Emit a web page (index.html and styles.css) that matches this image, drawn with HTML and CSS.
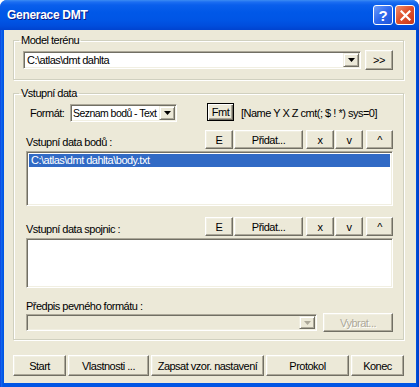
FILE: index.html
```html
<!DOCTYPE html>
<html lang="cs">

<head>
    <meta charset="UTF-8">
    <title>Generace DMT</title>
    <link rel="stylesheet" href="styles.css">
</head>

<body>

    <div class="window">

        <div class="titlebar">
            <span class="title">Generace DMT</span>
            <div class="caption-btns">
                <span class="cap-btn help">?</span>
                <span class="cap-btn close">
                    <svg width="11" height="11" viewBox="0 0 11 11">
                        <path d="M1.5 1.5 L9.5 9.5 M9.5 1.5 L1.5 9.5" stroke="#fff" stroke-width="2.2" stroke-linecap="square" />
                    </svg>
                </span>
            </div>
        </div>

        <div class="client">

            <fieldset class="group group-model">
                <legend>Model terénu</legend>
                <div class="row row-model">
                    <div class="combo combo-model">
                        <span class="combo-text">C:\atlas\dmt dahlta</span>
                        <span class="drop"><svg width="7" height="4" viewBox="0 0 7 4"><polygon points="0,0 7,0 3.5,4" fill="#000" /></svg></span>
                    </div>
                    <button class="btn btn-more">&gt;&gt;</button>
                </div>
            </fieldset>

            <fieldset class="group group-data">
                <legend>Vstupní data</legend>

                <div class="row row-format">
                    <span class="lbl-format">Formát:</span>
                    <div class="combo combo-format">
                        <span class="combo-text">Seznam bodů - Text</span>
                        <span class="drop"><svg width="7" height="4" viewBox="0 0 7 4"><polygon points="0,0 7,0 3.5,4" fill="#000" /></svg></span>
                    </div>
                    <button class="btn btn-default btn-fmt">Fmt</button>
                    <span class="fmt-info">[Name Y X Z cmt(; $ ! *) sys=0]</span>
                </div>

                <div class="row row-list row-body">
                    <span class="lbl">Vstupní data bodů :</span>
                    <div class="list-btns">
                        <button class="btn btn-e">E</button>
                        <button class="btn btn-add">Přidat...</button>
                        <button class="btn btn-x">x</button>
                        <button class="btn btn-v">v</button>
                        <button class="btn btn-up">^</button>
                    </div>
                </div>
                <div class="listbox list-body">
                    <div class="item selected">C:\atlas\dmt dahlta\body.txt</div>
                </div>

                <div class="row row-list row-lines">
                    <span class="lbl">Vstupní data spojnic :</span>
                    <div class="list-btns">
                        <button class="btn btn-e">E</button>
                        <button class="btn btn-add">Přidat...</button>
                        <button class="btn btn-x">x</button>
                        <button class="btn btn-v">v</button>
                        <button class="btn btn-up">^</button>
                    </div>
                </div>
                <div class="listbox list-lines"></div>

                <div class="lbl lbl-fixed">Předpis pevného formátu :</div>
                <div class="row row-fixed">
                    <div class="combo combo-fixed disabled">
                        <span class="combo-text"></span>
                        <span class="drop"><svg width="7" height="4" viewBox="0 0 7 4"><polygon points="0,0 7,0 3.5,4" fill="#ACA899" /></svg></span>
                    </div>
                    <button class="btn btn-pick" disabled>Vybrat...</button>
                </div>
            </fieldset>

            <div class="actions">
                <button class="btn act-start">Start</button>
                <button class="btn act-props">Vlastnosti ...</button>
                <button class="btn act-save">Zapsat vzor. nastavení</button>
                <button class="btn act-log">Protokol</button>
                <button class="btn act-end">Konec</button>
            </div>

        </div>

    </div>

</body>

</html>
```

FILE: styles.css
```css
* {
    box-sizing: border-box;
}

body {
    margin: 0;
    background: #fff;
    font-family: "Liberation Sans", Arial, sans-serif;
    font-size: 11px;
    letter-spacing: -0.5px;
    color: #000;
}

.window {
    width: 419px;
    height: 387px;
    display: flex;
    flex-direction: column;
    background: linear-gradient(to right, #0831D9 0, #166AEE 1px, #0055E5 3px, #0055E5 416px, #0041C8 418px);
    border-radius: 7px 7px 0 0;
    overflow: hidden;
}

/* title bar */

.titlebar {
    height: 30px;
    flex: none;
    display: flex;
    align-items: center;
    justify-content: space-between;
    padding: 0 4px 1px 7px;
    background: linear-gradient(to bottom, #3C8CF3 0, #1C6EF2 2px, #0A5FEC 5px, #0058E8 12px, #0055E5 20px, #004DDC 26px, #0043CF 30px);
}

.title {
    color: #fff;
    font-weight: bold;
    font-size: 12px;
    letter-spacing: -0.3px;
    text-shadow: 1px 1px #0A1883;
}

.caption-btns {
    display: flex;
    gap: 2px;
    margin-top: 1px;
}

.cap-btn {
    width: 20px;
    height: 20px;
    border: 1px solid #fff;
    border-radius: 3px;
    display: flex;
    align-items: center;
    justify-content: center;
}

.help {
    background: linear-gradient(135deg, #6D9CF9 0, #2F69EE 50%, #1F54D8 100%);
    color: #fff;
    font-weight: bold;
    font-size: 15px;
    letter-spacing: 0;
}

.close {
    background: linear-gradient(135deg, #F08F6D 0, #E0532E 45%, #C8361A 100%);
}

/* client */

.client {
    flex: 1;
    margin: 0 3px 4px 4px;
    padding: 0 0 0 9px;
    background: #ECE9D8;
}

.group {
    width: 391px;
    margin: 0;
    padding: 0 10px 0 5px;
    border: 1px solid #D0D0BF;
    box-shadow: 1px 1px 0 #fff, inset 1px 1px 0 #fff;
    min-inline-size: 0;
}

.group legend {
    padding: 0 2px;
    line-height: 13px;
}

.group-model {
    margin-top: 4px;
    height: 46px;
}

.group-data {
    margin-top: 7px;
    height: 253px;
}

.row {
    display: flex;
    align-items: center;
}

.row-model {
    margin: 3px 0 0 4px;
    height: 20px;
    gap: 4px;
}

/* controls */

.btn {
    font-family: inherit;
    font-size: 11px;
    letter-spacing: -0.5px;
    color: #000;
    background: #ECE9D8;
    border: 1px solid;
    border-color: #fff #716F64 #716F64 #fff;
    box-shadow: inset -1px -1px 0 #ACA899, inset 1px 1px 0 #F1EFE2;
    padding: 0;
    height: 19px;
}

.btn:disabled {
    color: #ACA899;
    text-shadow: 1px 1px #fff;
}

.btn-default {
    border: 1px solid #000;
    box-shadow: inset 1px 1px 0 #fff, inset -1px -1px 0 #716F64, inset -2px -2px 0 #ACA899;
}

.combo {
    display: flex;
    align-items: stretch;
    height: 18px;
    padding: 1px;
    background: #fff;
    border: 1px solid;
    border-color: #ACA899 #fff #fff #ACA899;
    box-shadow: inset 1px 1px 0 #716F64, inset -1px -1px 0 #F1EFE2;
}

.combo.disabled {
    background: #ECE9D8;
}

.combo-text {
    flex: 1;
    padding-left: 2px;
    line-height: 14px;
    white-space: nowrap;
    overflow: hidden;
}

.drop {
    width: 16px;
    flex: none;
    display: flex;
    align-items: center;
    justify-content: center;
    background: #ECE9D8;
    border: 1px solid;
    border-color: #F1EFE2 #716F64 #716F64 #F1EFE2;
    box-shadow: inset 1px 1px 0 #fff, inset -1px -1px 0 #ACA899;
}

.combo-model {
    width: 338px;
}

.btn-more {
    width: 28px;
    height: 20px;
}

.row-format {
    margin: 3px 0 0 11px;
    height: 19px;
}

.lbl-format {
    width: 40px;
}

.combo-format {
    width: 107px;
}

.combo-format .combo-text {
    padding-left: 1px;
    font-size: 10.5px;
    letter-spacing: -0.55px;
}

.btn-fmt {
    width: 27px;
    height: 18px;
    margin: 0 7px 1px 30px;
}

.row-list {
    margin-left: 7px;
    height: 19px;
    justify-content: space-between;
}

.row-body {
    margin-top: 8px;
}

.row-lines {
    margin-top: 11px;
}

.row-list .lbl {
    padding-top: 5px;
}

.list-btns {
    display: flex;
}

.btn-e,
.btn-x,
.btn-v {
    width: 28px;
}

.btn-up {
    width: 27px;
    margin-left: 3px;
}

.btn-add {
    width: 69px;
    margin: 0 3px 0 1px;
}

.btn-v {
    margin-left: 1px;
}

.listbox {
    margin: 2px 0 0 7px;
    width: 367px;
    padding: 2px;
    background: #fff;
    border: 1px solid;
    border-color: #ACA899 #fff #fff #ACA899;
    box-shadow: inset 1px 1px 0 #716F64, inset -1px -1px 0 #F1EFE2;
}

.list-body {
    height: 55px;
}

.list-lines {
    height: 50px;
}

.item {
    height: 13px;
    line-height: 13px;
    padding-left: 2px;
    white-space: nowrap;
}

.item.selected {
    background: #316AC5;
    color: #fff;
}

.lbl-fixed {
    margin: 12px 0 0 7px;
    line-height: 13px;
}

.row-fixed {
    margin-left: 7px;
    height: 19px;
}

.combo-fixed {
    width: 291px;
    height: 17px;
}

.btn-pick {
    width: 70px;
    margin-left: 6px;
}

/* bottom buttons */

.actions {
    display: flex;
    gap: 2px;
    margin-top: 15px;
}

.actions .btn {
    height: 21px;
}

.act-start {
    width: 53px;
}

.act-props {
    width: 81px;
}

.act-save {
    width: 113px;
}

.act-log {
    width: 83px;
}

.act-end {
    width: 53px;
}
```
